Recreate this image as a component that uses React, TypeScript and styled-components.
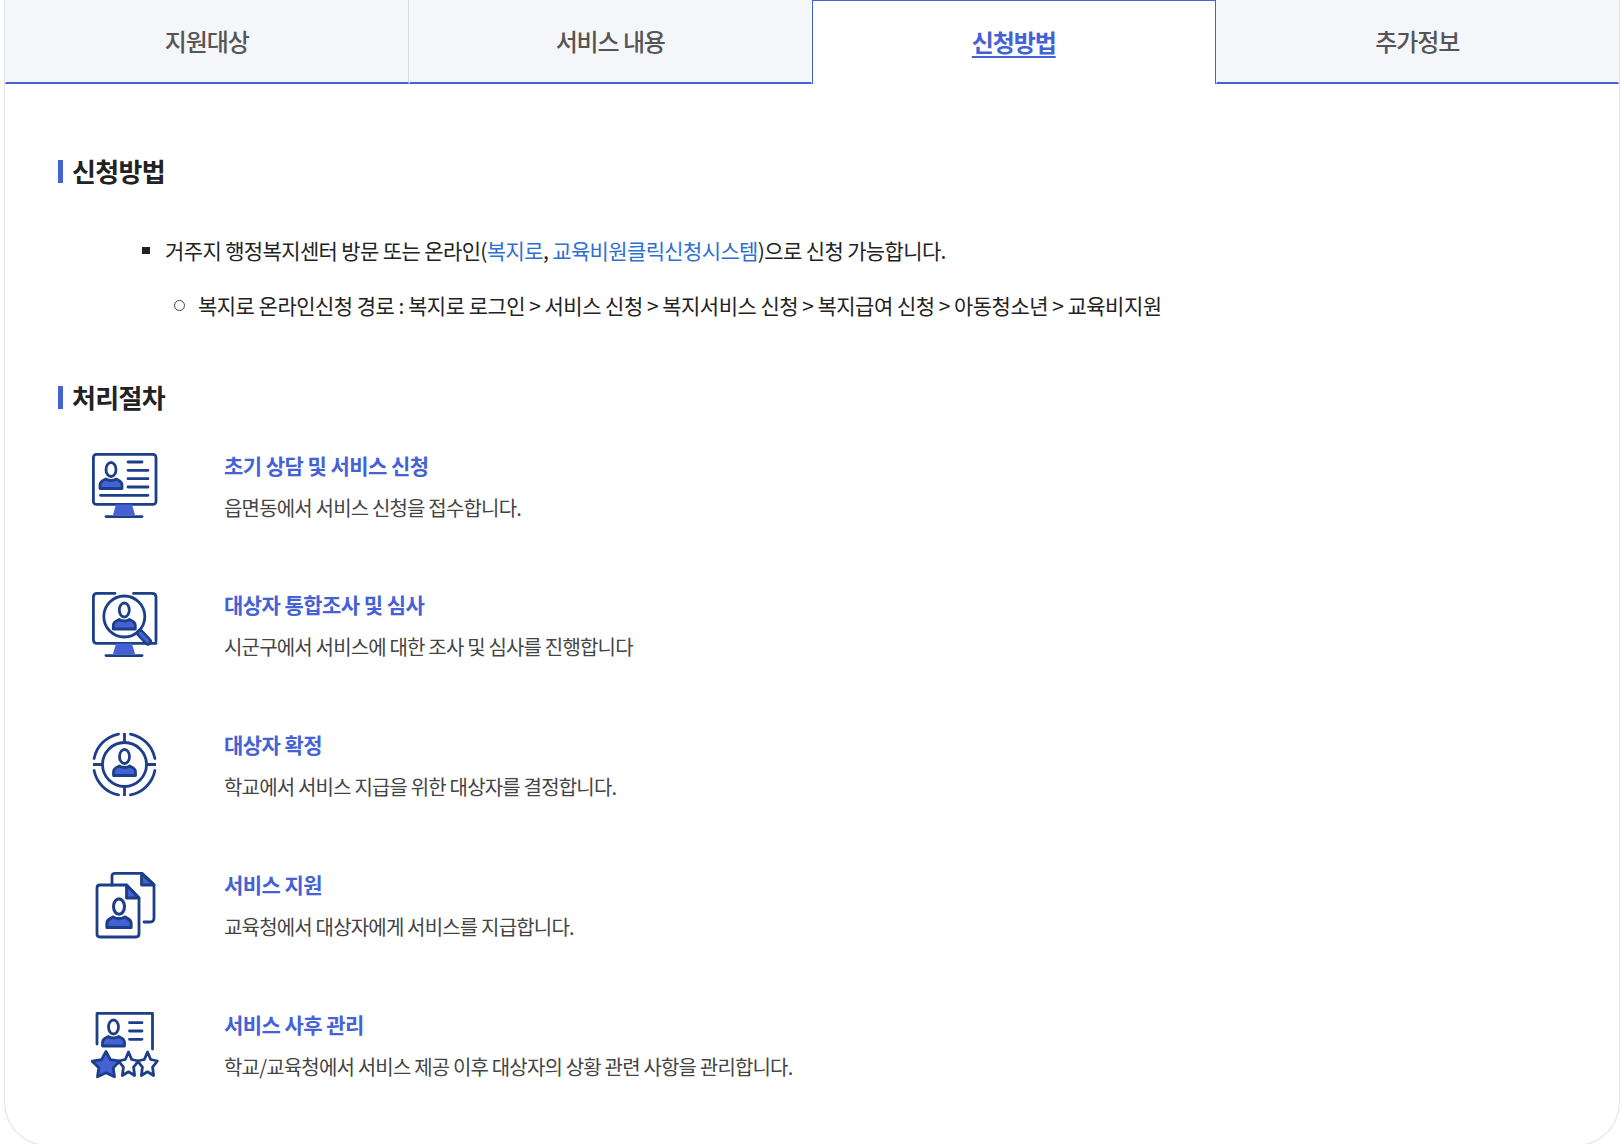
import React from 'react';
import styled, { createGlobalStyle } from 'styled-components';

const NAVY = '#1d3f87';
const BLUE = '#4461d6';

const GlobalStyle = createGlobalStyle`
  html, body {
    margin: 0;
    padding: 0;
    background: #fff;
  }
  body {
    font-family: "Noto Sans CJK KR", "Noto Sans", sans-serif;
    overflow: hidden;
  }
  * {
    box-sizing: border-box;
  }
`;

const Page = styled.div`
  width: 1622px;
  height: 1144px;
  padding: 0 2px 0 4px;
  overflow: hidden;
`;

const Card = styled.div`
  height: 1146px;
  border: 1px solid #e2e2e2;
  border-top: 0;
  border-radius: 0 0 44px 44px;
  overflow: hidden;
`;

const Tabs = styled.nav`
  display: flex;
  height: 84px;
`;

const Tab = styled.a<{ $active?: boolean; $divided?: boolean }>`
  flex: 1;
  display: flex;
  align-items: center;
  justify-content: center;
  padding-bottom: ${p => (p.$active ? '3px' : '2px')};
  font-size: 24px;
  letter-spacing: -1.1px;
  font-weight: ${p => (p.$active ? 700 : 500)};
  color: ${p => (p.$active ? BLUE : '#555')};
  text-decoration: ${p => (p.$active ? 'underline' : 'none')};
  text-underline-offset: 4px;
  background: ${p => (p.$active ? '#fff' : '#f5f6fa')};
  border-bottom: ${p => (p.$active ? '0' : `2px solid ${BLUE}`)};
  border-top: ${p => (p.$active ? `1px solid ${BLUE}` : '0')};
  border-left: 1px solid ${p => (p.$active ? BLUE : 'transparent')};
  border-right: 1px solid ${p => (p.$active ? BLUE : p.$divided ? '#d8dbe3' : 'transparent')};
`;

const Content = styled.div`
  padding: 75px 54px 0 53px;
`;

const Heading = styled.h3<{ $gap?: number }>`
  display: flex;
  align-items: center;
  gap: 9px;
  margin: ${p => p.$gap ?? 0}px 0 0;
  height: 24px;
  font-size: 26px;
  line-height: 24px;
  font-weight: 700;
  letter-spacing: -0.7px;
  color: #222;

  &::before {
    content: '';
    width: 5px;
    height: 23px;
    background: ${BLUE};
  }
`;

const MainList = styled.ul`
  list-style: none;
  margin: 52px 0 0;
  padding: 0 0 0 84px;
`;

const MainItem = styled.li`
  display: flex;
  align-items: center;
  gap: 15px;
  height: 30px;
  font-size: 21px;
  letter-spacing: -0.63px;
  color: #222;

  &::before {
    content: '';
    flex: none;
    width: 8px;
    height: 7px;
    background: #222;
  }
`;

const SubList = styled.ul`
  list-style: none;
  margin: 25px 0 0;
  padding: 0 0 0 32px;
`;

const SubItem = styled.li`
  display: flex;
  align-items: center;
  gap: 13px;
  height: 30px;
  font-size: 21px;
  letter-spacing: -0.52px;
  color: #222;

  &::before {
    content: '';
    flex: none;
    width: 9px;
    height: 9px;
    border: 1px solid #444;
    border-radius: 50%;
  }
`;

const LinkText = styled.a`
  color: #2f6fd0;
  text-decoration: none;
`;

const Steps = styled.div`
  display: flex;
  flex-direction: column;
  margin-top: 44px;
  padding-left: 34px;
`;

const Step = styled.div`
  display: flex;
  gap: 66px;
  height: 140px;

  &:first-child {
    height: 139px;
  }
`;

const IconBox = styled.div`
  flex: none;
  width: 66px;
  height: 66px;

  svg {
    display: block;
    overflow: visible;
  }
`;

const StepText = styled.div`
  display: flex;
  flex-direction: column;
  margin-top: -3px;
`;

const StepTitle = styled.strong`
  font-size: 21px;
  line-height: 30px;
  font-weight: 700;
  letter-spacing: -0.55px;
  color: ${BLUE};
`;

const StepDesc = styled.span`
  margin-top: 13px;
  font-size: 20px;
  line-height: 30px;
  letter-spacing: -0.82px;
  color: #444;
`;

function Icon({ children }: { children: React.ReactNode }) {
  return (
    <svg
      width="66"
      height="66"
      viewBox="0 0 66 66"
      fill="none"
      stroke={NAVY}
      strokeWidth="2.8"
      strokeLinecap="round"
      strokeLinejoin="round"
    >
      {children}
    </svg>
  );
}

// small person used in every icon: head outline and filled shoulders
function Person({ x, y, scale = 1 }: { x: number; y: number; scale?: number }) {
  return (
    <g transform={`translate(${x} ${y}) scale(${scale})`}>
      <ellipse cx="0" cy="-9.5" rx="5" ry="7" />
      <path
        d="M-5 0 C-8 1.5 -11 2 -11 6 V9.5 H11 V6 C11 2 8 1.5 5 0 C3 2 -3 2 -5 0 Z"
        fill={BLUE}
      />
    </g>
  );
}

function MonitorStand() {
  return (
    <>
      <path d="M24 51.5 H40 L43 62 H21 Z" fill={BLUE} stroke="none" />
      <path d="M14 63.6 H50" />
    </>
  );
}

function starPoints(cx: number, cy: number, rx: number, ry: number) {
  const pts: string[] = [];
  for (let i = 0; i < 10; i++) {
    const k = i % 2 === 0 ? 1 : 0.52;
    const a = (Math.PI / 5) * i - Math.PI / 2;
    pts.push(`${(cx + rx * k * Math.cos(a)).toFixed(1)},${(cy + ry * k * Math.sin(a)).toFixed(1)}`);
  }
  return pts.join(' ');
}

function ApplyIcon() {
  return (
    <Icon>
      <rect x="1.4" y="1.4" width="62.6" height="50" rx="3" />
      <Person x={19} y={26} />
      <path d="M36 9 H50 M36 17.3 H56 M36 25.7 H56 M36 34 H56 M8.5 42.3 H56" />
      <MonitorStand />
    </Icon>
  );
}

function ReviewIcon() {
  return (
    <Icon>
      <path d="M23 1.4 H5 Q1.4 1.4 1.4 5 V47.5 Q1.4 51.4 5 51.4 H64 M41.5 1.4 H60 Q64 1.4 64 5 V49" />
      <circle cx="32.3" cy="24.5" r="20.5" />
      <Person x={32.3} y={27.5} />
      <path d="M48 41 L56 49.5" stroke={NAVY} strokeWidth="8" />
      <path d="M48.5 41.5 L55.5 49" stroke={BLUE} strokeWidth="3.4" />
      <MonitorStand />
    </Icon>
  );
}

function TargetIcon() {
  return (
    <Icon>
      <circle cx="32.5" cy="32.5" r="22" />
      <path d="M32.5 1 V11 M32.5 54 V64 M1 32.5 H11 M54 32.5 H64" strokeLinecap="butt" />
      <path d="M2.1 26.5 A 31 31 0 0 1 26.5 2.1 M38.5 2.1 A 31 31 0 0 1 62.9 26.5 M62.9 38.5 A 31 31 0 0 1 38.5 62.9 M26.5 62.9 A 31 31 0 0 1 2.1 38.5" />
      <Person x={32.5} y={34} />
    </Icon>
  );
}

function DocumentIcon() {
  return (
    <Icon>
      <path d="M20 13 V4 Q20 1.4 23 1.4 H50 L62 12.5 V46 Q62 50 58 50 H52" />
      <path d="M49.5 1.4 V13 H62 Z" fill={BLUE} />
      <path d="M34.5 13 H8 Q5 13 5 16 V62 Q5 65 8 65 H44 Q47 65 47 62 V26 Z" />
      <path d="M34.5 13 V26 H47 Z" fill={BLUE} />
      <Person x={27} y={45} scale={1.1} />
    </Icon>
  );
}

function CareIcon() {
  return (
    <Icon>
      <path d="M5 32 V1.4 H60.5 V37" />
      <Person x={21.5} y={24.5} />
      <path d="M37.5 10.7 H50 M37.5 19 H50 M37.5 27.3 H50" />
      <polygon points={starPoints(55.5, 53, 10.4, 13)} fill="#fff" />
      <polygon points={starPoints(36.5, 53, 10.4, 13)} fill="#fff" />
      <polygon points={starPoints(14, 53.5, 14.5, 14)} fill={BLUE} />
    </Icon>
  );
}

const steps = [
  { icon: <ApplyIcon />, title: '초기 상담 및 서비스 신청', desc: '읍면동에서 서비스 신청을 접수합니다.' },
  { icon: <ReviewIcon />, title: '대상자 통합조사 및 심사', desc: '시군구에서 서비스에 대한 조사 및 심사를 진행합니다' },
  { icon: <TargetIcon />, title: '대상자 확정', desc: '학교에서 서비스 지급을 위한 대상자를 결정합니다.' },
  { icon: <DocumentIcon />, title: '서비스 지원', desc: '교육청에서 대상자에게 서비스를 지급합니다.' },
  { icon: <CareIcon />, title: '서비스 사후 관리', desc: '학교/교육청에서 서비스 제공 이후 대상자의 상황 관련 사항을 관리합니다.' },
];

const tabs = ['지원대상', '서비스 내용', '신청방법', '추가정보'];

export default function App() {
  return (
    <Page>
      <GlobalStyle />
      <Card>
        <Tabs>
          {tabs.map((t, i) => (
            <Tab key={t} $active={t === '신청방법'} $divided={i === 0}>
              {t}
            </Tab>
          ))}
        </Tabs>
        <Content>
          <Heading>신청방법</Heading>
          <MainList>
            <MainItem>
              <span>
                거주지 행정복지센터 방문 또는 온라인(<LinkText>복지로</LinkText>, <LinkText>교육비원클릭신청시스템</LinkText>)으로 신청 가능합니다.
              </span>
            </MainItem>
            <SubList>
              <SubItem>
                <span>복지로 온라인신청 경로 : 복지로 로그인 &gt; 서비스 신청 &gt; 복지서비스 신청 &gt; 복지급여 신청 &gt; 아동청소년 &gt; 교육비지원</span>
              </SubItem>
            </SubList>
          </MainList>
          <Heading $gap={65}>처리절차</Heading>
          <Steps>
            {steps.map(s => (
              <Step key={s.title}>
                <IconBox>{s.icon}</IconBox>
                <StepText>
                  <StepTitle>{s.title}</StepTitle>
                  <StepDesc>{s.desc}</StepDesc>
                </StepText>
              </Step>
            ))}
          </Steps>
        </Content>
      </Card>
    </Page>
  );
}
